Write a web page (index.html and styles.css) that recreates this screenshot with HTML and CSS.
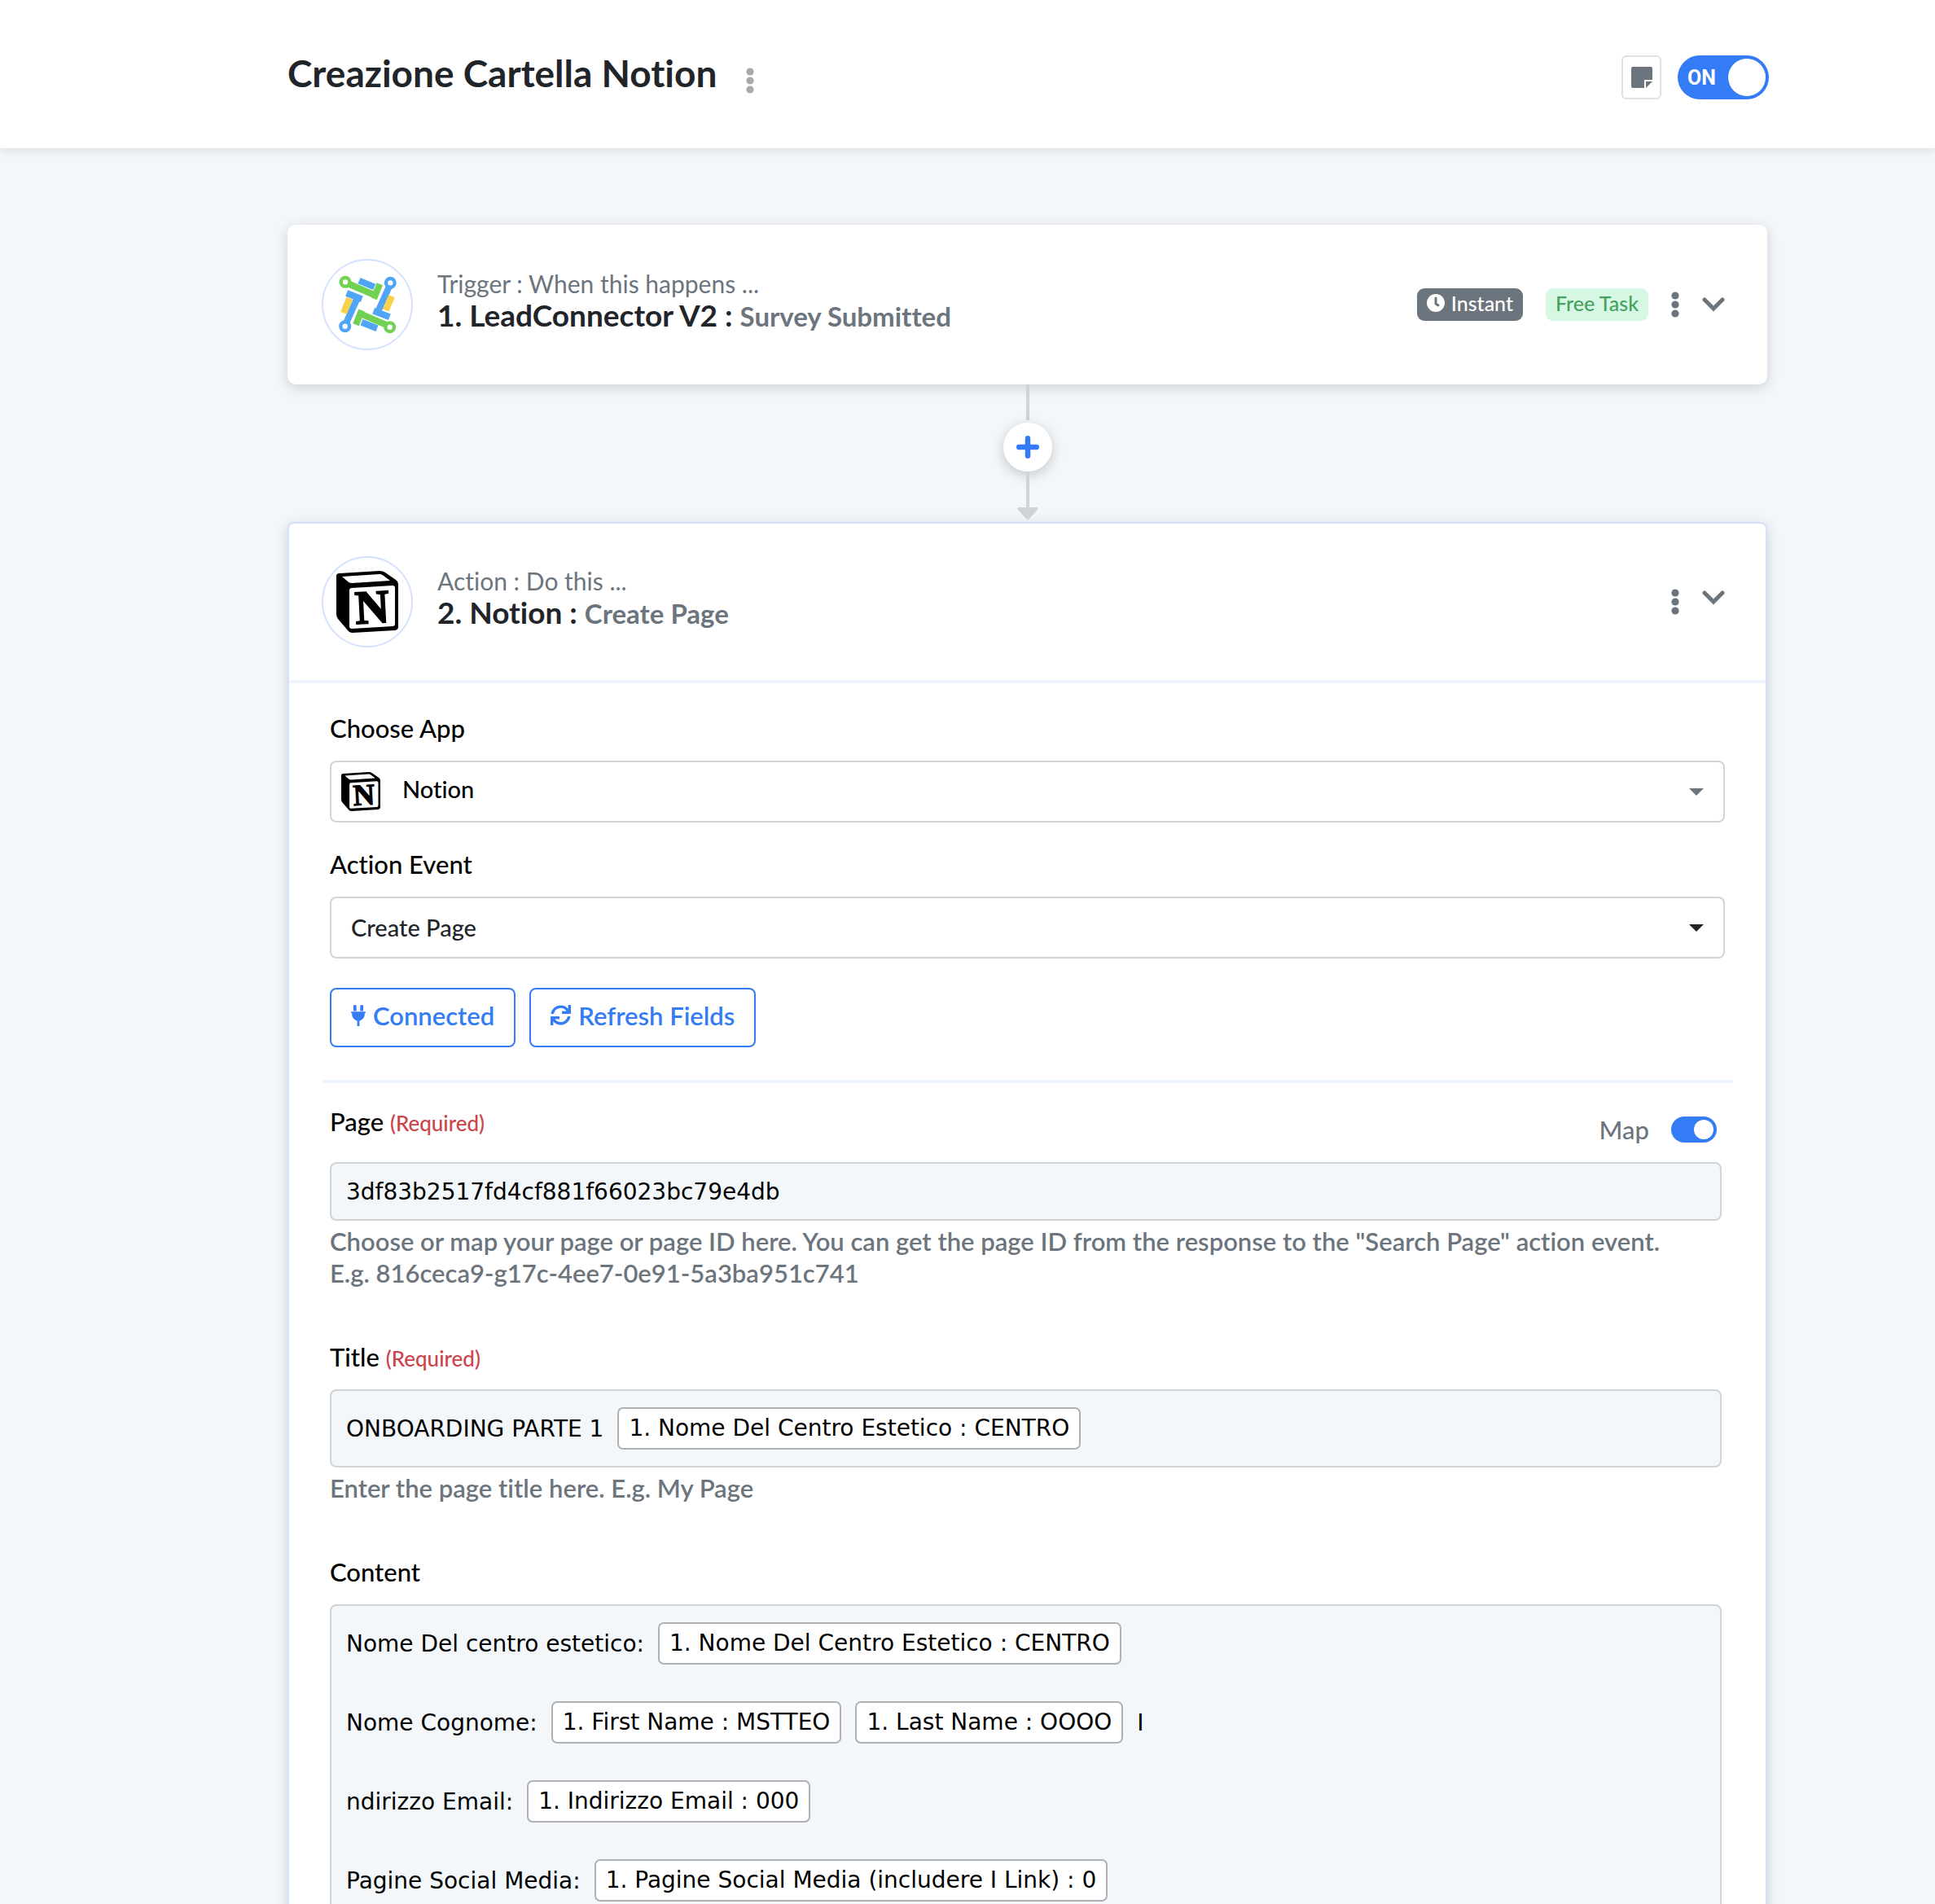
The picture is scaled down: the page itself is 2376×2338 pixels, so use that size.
FILE: index.html
```html
<!DOCTYPE html>
<html lang="it">
<head>
    <meta charset="UTF-8">
    <meta name="viewport" content="width=device-width, initial-scale=1.0">
    <title>Creazione Cartella Notion</title>
    <link rel="stylesheet" href="styles.css">
</head>
<body>
    <!-- shared icons -->
    <svg class="sprite" aria-hidden="true">
        <symbol id="dots" viewBox="0 0 10 32">
            <circle cx="5" cy="5" r="4.6"/>
            <circle cx="5" cy="16" r="4.6"/>
            <circle cx="5" cy="27" r="4.6"/>
        </symbol>
        <symbol id="chevron" viewBox="0 0 28 18">
            <path d="M3 3l11 11L25 3" fill="none" stroke="currentColor" stroke-width="5" stroke-linecap="round"/>
        </symbol>
        <symbol id="caret" viewBox="0 0 18 9">
            <path d="M0 0h18L9 9z"/>
        </symbol>
        <symbol id="notion" viewBox="0 0 76 76">
            <path d="M0 6Q0 3 4 3L53 0Q57 0 60 2L73 11Q76 13 76 17V69Q76 72 72 73L20 76Q16 76 14 73L2 59Q0 56 0 53z"/>
            <path d="M7 7L53 4Q56 4 58 6L66 12L19 15Q16 15 14 13z" fill="#fff"/>
            <path d="M16 24Q16 21 19 21L69 18Q72 18 72 21V65Q72 68 69 68L19 71Q16 71 16 68z" fill="#fff"/>
            <text class="notion-letter" x="23" y="64" transform="rotate(-3 44 45)">N</text>
        </symbol>
    </svg>

    <header class="topbar">
        <h1>Creazione Cartella Notion</h1>
        <button class="icon-btn more" type="button" aria-label="Menu"><svg class="dots"><use href="#dots"/></svg></button>
        <div class="topbar-right">
            <button class="note-btn" type="button" aria-label="Note">
                <svg viewBox="0 0 26 26"><path d="M2 0h22q2 0 2 2v14h-10v10H2q-2 0-2-2V2q0-2 2-2z"/><path d="M18 18h8l-8 8z"/></svg>
            </button>
            <label class="power">
                <input type="checkbox" aria-label="ON" checked>
                <span>ON</span>
            </label>
        </div>
    </header>

    <main class="workflow">
        <section class="card">
            <div class="card-head">
                <div class="app-logo">
                    <svg class="lead-logo" viewBox="69 69 222 222">
                        <g fill="none" stroke="#50a5f6" stroke-width="24">
                            <path d="M260 115L217 211M203 203L262 226"/>
                            <path d="M103 246L146 150M160 160L104 138"/>
                            <path d="M150 92L206 115"/>
                            <path d="M159 245L216 268"/>
                            <circle cx="265" cy="100" r="16" stroke-width="13" fill="#fff"/>
                            <circle cx="98" cy="260" r="16" stroke-width="13" fill="#fff"/>
                        </g>
                        <g fill="none" stroke="#70d152" stroke-width="24">
                            <path d="M114 105L212 147M204 158L226 104"/>
                            <path d="M248 254L150 212M159 201L138 254"/>
                            <circle cx="99" cy="97" r="16" stroke-width="13" fill="#fff"/>
                            <circle cx="263" cy="263" r="16" stroke-width="13" fill="#fff"/>
                        </g>
                        <path d="M115 157L93 211M270 149L248 201" stroke="#f8d24c" stroke-width="25"/>
                    </svg>
                </div>
                <div class="card-title">
                    <p>Trigger : When this happens ...</p>
                    <h2>1. LeadConnector V2 : <span>Survey Submitted</span></h2>
                </div>
                <div class="card-tools">
                    <span class="badge badge-dark">
                        <svg viewBox="0 0 22 22"><circle cx="11" cy="11" r="11" fill="#fff"/><path d="M11 5v7l3 2" fill="none" stroke="#6c757d" stroke-width="3" stroke-linecap="round"/></svg>
                        Instant
                    </span>
                    <span class="badge badge-green">Free Task</span>
                    <button class="icon-btn" type="button" aria-label="Menu"><svg class="dots"><use href="#dots"/></svg></button>
                    <button class="icon-btn" type="button" aria-label="Espandi"><svg class="chevron"><use href="#chevron"/></svg></button>
                </div>
            </div>
        </section>

        <div class="connector">
            <div class="line"></div>
            <button class="add-btn" type="button" aria-label="Aggiungi">
                <svg viewBox="0 0 26 26"><path d="M13 3v20M3 13h20" stroke="#347bf6" stroke-width="6" stroke-linecap="round"/></svg>
            </button>
            <div class="line"></div>
            <svg class="arrow" viewBox="0 0 26 15"><path d="M2 0h22q3 1 1 3L15 14q-2 2-4 0L1 3Q-1 1 2 0z"/></svg>
        </div>

        <section class="card card-active">
            <div class="card-head">
                <div class="app-logo">
                    <svg class="notion-logo"><use href="#notion"/></svg>
                </div>
                <div class="card-title">
                    <p>Action : Do this ...</p>
                    <h2>2. Notion : <span>Create Page</span></h2>
                </div>
                <div class="card-tools">
                    <button class="icon-btn" type="button" aria-label="Menu"><svg class="dots"><use href="#dots"/></svg></button>
                    <button class="icon-btn raised" type="button" aria-label="Comprimi"><svg class="chevron"><use href="#chevron"/></svg></button>
                </div>
            </div>

            <form class="card-body">
                <div class="setup">
                    <label for="app">Choose App</label>
                    <div class="select-box with-icon">
                        <svg class="select-icon"><use href="#notion"/></svg>
                        <select id="app"><option>Notion</option></select>
                        <svg class="caret"><use href="#caret"/></svg>
                    </div>

                    <label for="event">Action Event</label>
                    <div class="select-box">
                        <select id="event"><option>Create Page</option></select>
                        <svg class="caret"><use href="#caret"/></svg>
                    </div>

                    <div class="actions">
                        <button class="btn" type="button">
                            <svg class="plug" viewBox="0 0 19 28"><path d="M3 1q0-1 2-1t2 1v7H3zM12 1q0-1 2-1t2 1v7h-4zM0 9h19v2h-1q0 8-7 10v7H8v-7q-7-2-7-10H0z"/></svg>
                            Connected
                        </button>
                        <button class="btn" type="button">
                            <svg class="sync" viewBox="0 0 512 512"><path d="M440.65 12.57l4 82.77A247.16 247.16 0 0 0 255.83 8C134.73 8 33.91 94.92 12.29 209.82A12 12 0 0 0 24.09 224h49.05a12 12 0 0 0 11.67-9.26 175.91 175.91 0 0 1 317-56.94l-101.46-4.86a12 12 0 0 0-12.57 12v47.41a12 12 0 0 0 12 12H500a12 12 0 0 0 12-12V12a12 12 0 0 0-12-12h-47.37a12 12 0 0 0-11.98 12.57zM255.83 432a175.61 175.61 0 0 1-146-77.8l101.8 4.87a12 12 0 0 0 12.57-12v-47.4a12 12 0 0 0-12-12H12a12 12 0 0 0-12 12V500a12 12 0 0 0 12 12h47.35a12 12 0 0 0 12-12.6l-4.15-82.57A247.17 247.17 0 0 0 255.83 504c121.11 0 221.93-86.92 243.55-201.82a12 12 0 0 0-11.8-14.18h-49.05a12 12 0 0 0-11.67 9.26A175.86 175.86 0 0 1 255.83 432z"/></svg>
                            Refresh Fields
                        </button>
                    </div>
                </div>

                <div class="mapping">
                    <div class="field">
                        <div class="field-head">
                            <label for="page">Page <small>(Required)</small></label>
                            <label class="map">Map <input type="checkbox" checked></label>
                        </div>
                        <input class="text-field" type="text" id="page" value="3df83b2517fd4cf881f66023bc79e4db">
                        <p class="help">Choose or map your page or page ID here. You can get the page ID from the response to the "Search Page" action event.<br>E.g. 816ceca9-g17c-4ee7-0e91-5a3ba951c741</p>
                    </div>

                    <div class="field">
                        <label id="title-label">Title <small>(Required)</small></label>
                        <div class="rich-field" contenteditable="true" role="textbox" aria-labelledby="title-label" spellcheck="false">
                            <div class="row">ONBOARDING PARTE 1 <span class="chip">1. Nome Del Centro Estetico : CENTRO</span></div>
                        </div>
                        <p class="help">Enter the page title here. E.g. My Page</p>
                    </div>

                    <div class="field">
                        <label id="content-label">Content</label>
                        <div class="rich-field" contenteditable="true" role="textbox" aria-multiline="true" aria-labelledby="content-label" spellcheck="false">
                            <div class="row">Nome Del centro estetico: <span class="chip">1. Nome Del Centro Estetico : CENTRO</span></div>
                            <div class="row">Nome Cognome: <span class="chip">1. First Name : MSTTEO</span> <span class="chip">1. Last Name : OOOO</span> I</div>
                            <div class="row">ndirizzo Email: <span class="chip">1. Indirizzo Email : 000</span></div>
                            <div class="row">Pagine Social Media: <span class="chip">1. Pagine Social Media (includere I Link) : 0</span></div>
                        </div>
                    </div>
                </div>
            </form>
        </section>
    </main>
</body>
</html>
```
FILE: styles.css
```css
* {
    box-sizing: border-box;
}

body {
    font-family: "Avenir Next", Lato, sans-serif;
    font-variant-ligatures: none;
    background-color: #f3f7fa;
    color: #212529;
    height: 100vh;
    margin: 0;
    overflow: hidden;
}

h1, h2, p {
    margin: 0;
}

button, input, select {
    font-family: inherit;
    font-variant-ligatures: none;
}

svg {
    display: block;
    fill: currentColor;
    flex: none;
}

.sprite {
    display: none;
}

/* top bar */
.topbar {
    display: flex;
    align-items: center;
    height: 182px;
    padding: 0 204px 0 353px;
    background-color: #fff;
    box-shadow: 0 2px 12px rgba(0, 0, 0, 0.12);
}

.topbar h1 {
    font-size: 46px;
    line-height: 54px;
    font-weight: 700;
    padding-bottom: 2px;
}

.icon-btn {
    display: flex;
    padding: 0;
    border: none;
    background: none;
    color: #6c757d;
    cursor: pointer;
}

.more {
    color: #a9a9a9;
    margin: 16px 0 0 36px;
}

.dots {
    width: 10px;
    height: 32px;
}

.chevron {
    width: 28px;
    height: 18px;
}

.raised {
    margin-bottom: 10px;
}

.topbar-right {
    display: flex;
    gap: 20px;
    margin-left: auto;
    padding-top: 8px;
}

.note-btn {
    display: flex;
    align-items: center;
    justify-content: center;
    width: 49px;
    height: 54px;
    padding: 0;
    border: 2px solid #dee2e6;
    border-radius: 6px;
    background-color: #fff;
    color: #6c757d;
    cursor: pointer;
}

.note-btn svg {
    width: 26px;
    height: 26px;
}

.power {
    display: grid;
    align-items: center;
    cursor: pointer;
}

.power > * {
    grid-area: 1 / 1;
}

.power span {
    font-family: Roboto, sans-serif;
    font-size: 25px;
    font-weight: 700;
    color: #fff;
    padding-left: 12px;
}

/* switches */
.power input, .map input {
    appearance: none;
    display: flex;
    justify-content: flex-end;
    margin: 0;
    padding: 4px;
    background-color: #347bf6;
    border-radius: 27px;
    cursor: pointer;
}

.power input {
    width: 112px;
    height: 54px;
}

.power input::before, .map input::before {
    content: "";
    height: 100%;
    aspect-ratio: 1;
    border-radius: 50%;
    background-color: #fff;
}

/* cards */
.workflow {
    padding: 94px 206px 94px 353px;
}

.card {
    background-color: #fff;
    border-radius: 10px;
    box-shadow: 0 4px 16px rgba(33, 37, 60, 0.18);
}

.card-active {
    border: 2px solid #d5e2ff;
    border-radius: 8px;
}

.card-head {
    display: flex;
    align-items: center;
    gap: 30px;
    padding: 42px;
}

.card-active .card-head {
    padding: 40px;
    border-bottom: 4px solid #eff6ff;
}

.app-logo {
    display: flex;
    align-items: center;
    justify-content: center;
    width: 112px;
    height: 112px;
    border: 2px solid #d5e2ff;
    border-radius: 50%;
}

.lead-logo {
    width: 74px;
    height: 74px;
}

.notion-logo {
    width: 76px;
    height: 76px;
    color: #000;
}

.notion-letter {
    font-family: "Liberation Serif", serif;
    font-size: 58px;
    font-weight: 700;
    stroke: currentColor;
    stroke-width: 2px;
}

.card-title {
    flex: 1;
    padding-bottom: 8px;
}

.card-title p {
    font-size: 30px;
    line-height: 34px;
    color: #6c757d;
}

.card-title h2 {
    font-size: 37px;
    line-height: 44px;
    font-weight: 700;
}

.card-title h2 span {
    font-size: 33px;
    color: #6c757d;
}

.card-tools {
    display: flex;
    align-items: center;
    gap: 28px;
    padding-right: 10px;
}

.badge {
    display: flex;
    align-items: center;
    gap: 8px;
    height: 40px;
    padding: 0 12px 4px;
    border-radius: 9px;
    font-size: 25px;
    font-weight: 500;
}

.badge svg {
    width: 22px;
    height: 22px;
}

.badge-dark {
    background-color: #6c757d;
    color: #fff;
}

.badge-green {
    background-color: #d7f7e5;
    color: #43a35c;
}

/* arrow between the cards */
.connector {
    display: flex;
    flex-direction: column;
    align-items: center;
    height: 169px;
    padding-bottom: 3px;
    color: #cfd4d8;
}

.connector .line {
    width: 4px;
    height: 44px;
    background-color: #cfd4d8;
}

.add-btn {
    display: flex;
    align-items: center;
    justify-content: center;
    width: 60px;
    height: 60px;
    margin-top: 3px;
    padding: 0;
    border: none;
    border-radius: 50%;
    background-color: #fff;
    box-shadow: 0 4px 16px rgba(0, 0, 0, 0.2);
    cursor: pointer;
}

.add-btn svg {
    width: 28px;
    height: 28px;
}

.arrow {
    width: 26px;
    height: 15px;
}

/* form */
.card-body {
    padding: 0 40px 60px;
}

.card-body label {
    display: block;
    font-size: 31px;
    line-height: 36px;
    font-weight: 500;
    color: #000;
    margin-bottom: 22px;
}

.card-body small {
    font-size: 26px;
    line-height: 26px;
    color: #cb444a;
}

.setup {
    padding: 37px 10px 40px;
    border-bottom: 4px solid #eff6ff;
}

.select-box {
    position: relative;
    height: 76px;
    margin-bottom: 33px;
}

.select-box select {
    appearance: none;
    width: 100%;
    height: 100%;
    padding: 0 60px 2px 24px;
    border: 2px solid #cfd4d9;
    border-radius: 8px;
    background-color: #fff;
    color: #212529;
    font-size: 29px;
    font-weight: 500;
}

.with-icon select {
    padding: 0 60px 8px 87px;
    color: #000;
}

.select-icon {
    position: absolute;
    left: 14px;
    top: 14px;
    width: 48px;
    height: 48px;
    color: #000;
}

.caret {
    position: absolute;
    right: 26px;
    top: 34px;
    width: 18px;
    height: 9px;
    pointer-events: none;
}

.with-icon .caret {
    color: #6c757d;
}

.actions {
    display: flex;
    gap: 17px;
    padding-top: 3px;
}

.btn {
    display: flex;
    align-items: center;
    gap: 9px;
    height: 73px;
    padding: 0 24px 6px;
    border: 2px solid #347bf6;
    border-radius: 8px;
    background-color: #fff;
    color: #347bf6;
    font-size: 31px;
    font-weight: 600;
    cursor: pointer;
}

.plug {
    width: 18px;
    height: 26px;
}

.sync {
    width: 25px;
    height: 25px;
}

.mapping {
    padding: 29px 14px 0 10px;
}

.field {
    margin-bottom: 65px;
}

.field-head {
    display: flex;
    justify-content: space-between;
}

.field-head .map {
    display: flex;
    align-items: center;
    gap: 27px;
    padding: 10px 6px 0 0;
    color: #6c757d;
}

.map input {
    width: 56px;
    height: 32px;
}

.text-field, .rich-field {
    width: 100%;
    border: 2px solid #cfd4d9;
    border-radius: 8px;
    background-color: #f3f7fa;
    color: #000;
    font-family: Verdana, "DejaVu Sans", sans-serif;
    font-size: 28px;
}

.text-field {
    display: block;
    height: 72px;
    padding: 0 18px;
}

.rich-field {
    display: flex;
    flex-direction: column;
    gap: 45px;
    padding: 20px 18px;
}

.row {
    display: flex;
    align-items: center;
    gap: 17px;
}

.chip {
    height: 52px;
    padding: 0 12px;
    border: 2px solid #adb1b5;
    border-radius: 7px;
    background-color: #fff;
    line-height: 48px;
    white-space: nowrap;
}

.help {
    margin-top: 6px;
    font-size: 31px;
    line-height: 39px;
    font-weight: 600;
    color: #6c757d;
}
```
